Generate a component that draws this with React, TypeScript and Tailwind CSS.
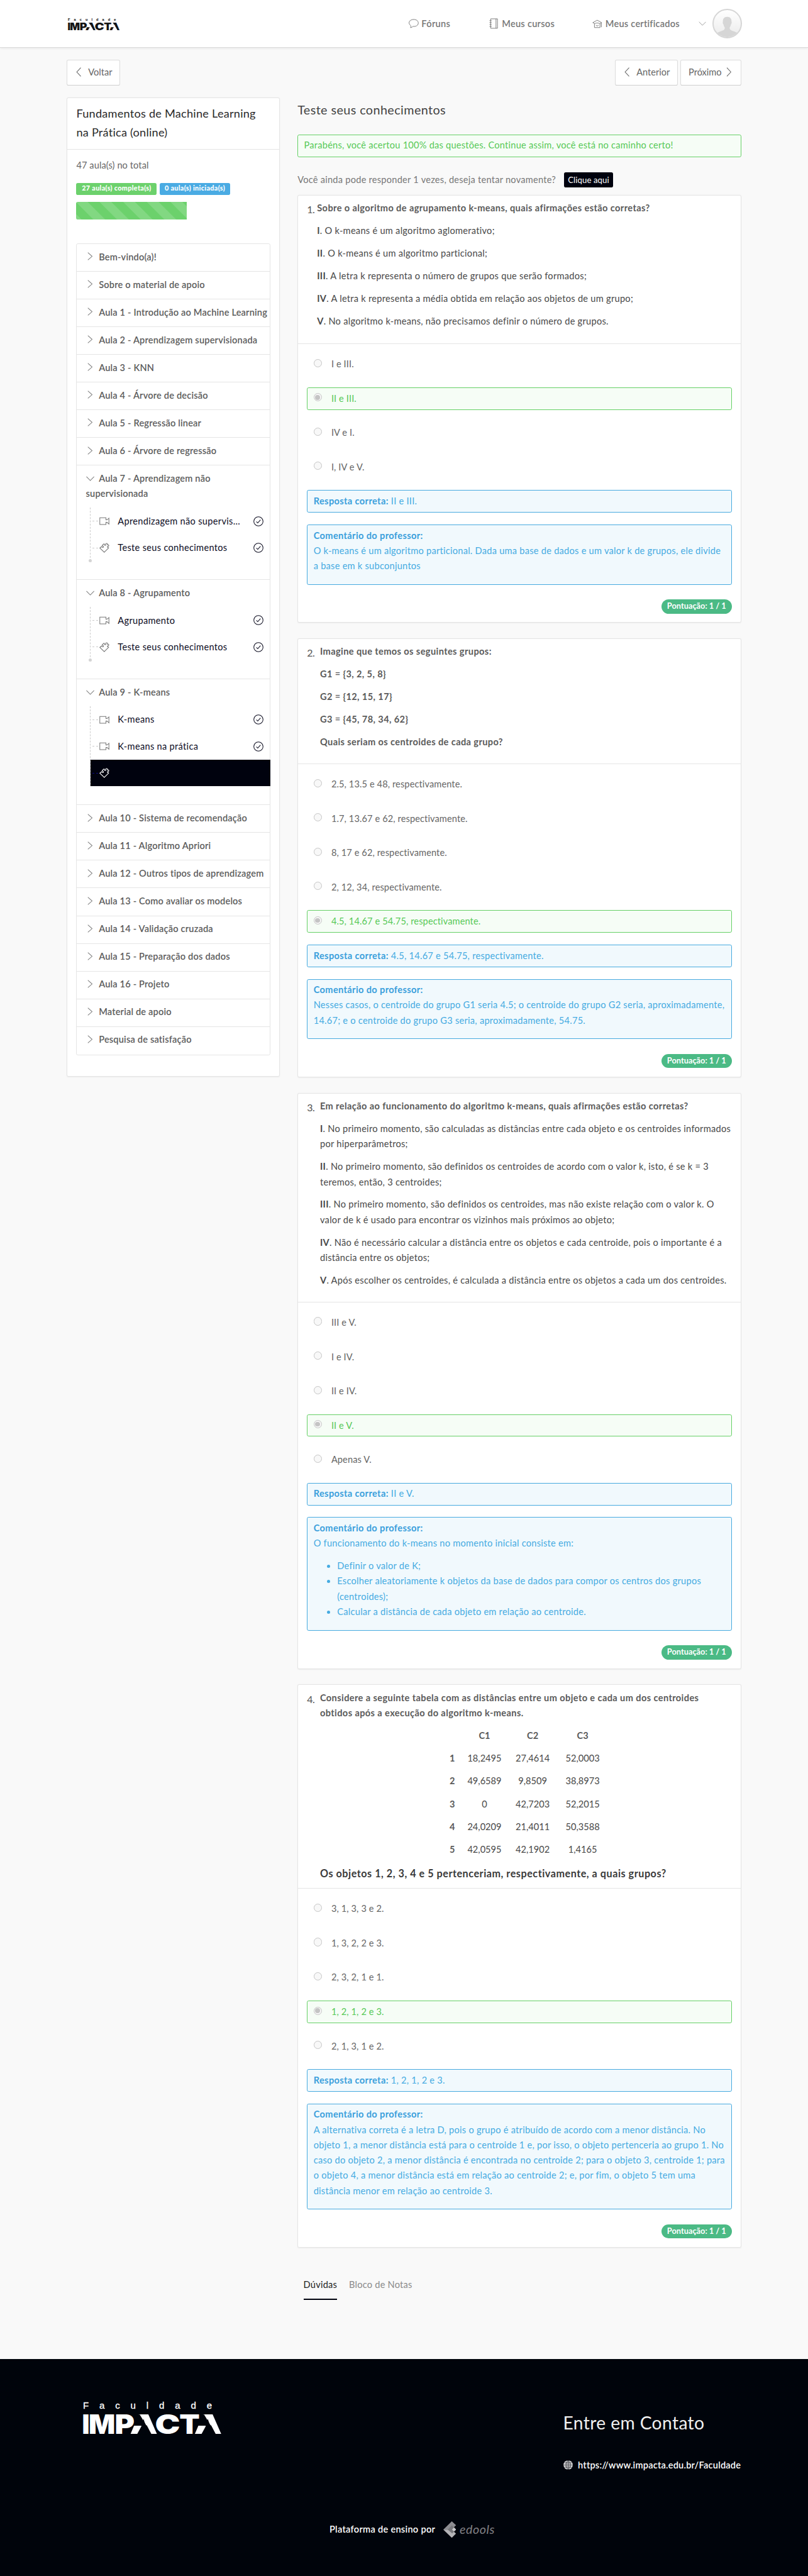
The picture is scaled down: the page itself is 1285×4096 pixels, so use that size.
import React from "react";

type Line = React.ReactNode;

function Lines({ lines }: { lines: Line[] }) {
  return (
    <>
      {lines.map((line, i) => (
        <React.Fragment key={i}>
          {i > 0 && <br />}
          {line}
        </React.Fragment>
      ))}
    </>
  );
}

/* ---------- icons ---------- */

function ChevronRight({ className }: { className: string }) {
  return (
    <svg viewBox="0 0 9 14" className={className} fill="none" stroke="currentColor" strokeWidth="1.1">
      <path d="M0.8 0.8 L8 7 L0.8 13.2" />
    </svg>
  );
}

function ChevronLeft({ className }: { className: string }) {
  return (
    <svg viewBox="0 0 9 16" className={className} fill="none" stroke="currentColor" strokeWidth="1.1">
      <path d="M8 0.6 L1.2 8 L8 15.4" />
    </svg>
  );
}

function ChevronDown({ className }: { className: string }) {
  return (
    <svg viewBox="0 0 14 9" className={className} fill="none" stroke="currentColor" strokeWidth="1.1">
      <path d="M0.5 1 L7 7.5 L13.5 1" />
    </svg>
  );
}

function VideoIcon() {
  return (
    <svg viewBox="0 0 17 14" className="h-[14px] w-[17px]" fill="none" stroke="currentColor" strokeWidth="1.1">
      <path d="M0.8 1.3 H11.2 V5 L13.4 4.6 L16.2 2 V12 L13.4 9.4 L11.2 9 V12.7 H0.8 Z" />
    </svg>
  );
}

function QuizIcon() {
  return (
    <svg viewBox="0 0 17 17" className="h-[17px] w-[17px]" fill="none" stroke="currentColor" strokeWidth="1.2" strokeLinejoin="round">
      <path d="M8.3 16 L0.8 9 L3.6 6.6 C4.4 6.2 4.6 8.2 5.9 8 C7.3 7.8 7.2 5.9 6 5.6 C5 5.4 4.4 5.2 5 4.4 L7.4 2 C8.2 1.6 8.6 2.2 8.6 3.4 C8.8 4.8 10.9 4.7 10.8 3.2 C10.7 1.8 11 1 12.4 1 C14.4 1 14 3 13.4 3.6 C15.2 2.8 16.6 4.4 15.6 5.8 C14.8 6.8 13.6 6.2 13.4 7 C13.4 7.8 15 7.8 15.8 8.6 Z" />
    </svg>
  );
}

function CheckIcon() {
  return (
    <svg viewBox="0 0 17 17" className="h-[17px] w-[17px]" fill="none" stroke="#0b0b1e" strokeWidth="1.1">
      <circle cx="8.5" cy="8.5" r="7.8" />
      <path d="M5 9 L7.3 11.2 L12 6" />
    </svg>
  );
}

function SpeechIcon() {
  return (
    <svg viewBox="0 0 17 16" className="h-[16px] w-[17px]" fill="none" stroke="currentColor" strokeWidth="1">
      <path d="M3.6 11.6 C-2.6 7 1.6 1 8.5 1 C13 1 16.2 3.6 16.2 7 C16.2 11 12 13.4 7.2 12.7 C6 14 4.6 14.6 2.9 14.8 C3.6 13.8 3.9 12.8 3.6 11.6 Z" />
    </svg>
  );
}

function NotebookIcon() {
  return (
    <svg viewBox="0 0 15 18" className="h-[18px] w-[15px]" fill="none" stroke="currentColor" strokeWidth="1">
      <path d="M2.5 1 H14 V17 H2.5 Z M11.5 1 V17 M0.5 4 H4 M0.5 7.2 H4 M0.5 10.6 H4 M0.5 14 H4" />
    </svg>
  );
}

function GraduationIcon() {
  return (
    <svg viewBox="0 0 17 15" className="h-[15px] w-[17px]" fill="none" stroke="currentColor" strokeWidth="1">
      <path d="M8.3 1.2 L0.8 5.3 L4 7 C5.6 5.6 11 5.6 12.6 7 L15.8 5.3 Z M3.6 7 V13.6 H13 V7 M6 9.6 L8.3 11 L10.6 9.6 M15.3 5.6 V13" />
    </svg>
  );
}

function GlobeIcon() {
  return (
    <svg viewBox="0 0 16 16" className="h-[16px] w-[16px]">
      <circle cx="8" cy="8" r="7.8" fill="#e9e9ea" />
      <g fill="none" stroke="#00040b" strokeWidth="0.8">
        <ellipse cx="8" cy="8" rx="3.6" ry="7.4" />
        <path d="M8 0.5 V15.5 M0.5 8 H15.5 M1.6 4.4 H14.4 M1.6 11.6 H14.4" />
      </g>
    </svg>
  );
}

function Avatar() {
  return (
    <div className="h-[50px] w-[50px] overflow-hidden rounded-full border-[3px] border-[#d6d6d6] bg-gradient-to-b from-white to-[#ebebeb]">
      <svg viewBox="0 0 44 44" className="h-full w-full" fill="#d6d6d6">
        <path d="M22 11 C27 11 29.4 14.4 29 19 C29.6 20 29.2 22.4 28 23.4 C27.6 26 26.6 27.4 26 28.4 C25.8 31.4 27 32.8 31 34 C35.5 35.4 38 36.4 39 38 L39 44 H5 V38 C6 36.4 8.5 35.4 13 34 C17 32.8 18.2 31.4 18 28.4 C17.4 27.4 16.4 26 16 23.4 C14.8 22.4 14.4 20 15 19 C14.6 14.4 17 11 22 11 Z" />
      </svg>
    </div>
  );
}

/* The wordmark: each letter is stretched to its own width, and both As lose
   the upper half of their left leg. */
type LogoLetter = { c: string; x: number; w: number };

const SLASHED_LETTERS: LogoLetter[] = [
  { c: "A", x: 79.2, w: 47 },
  { c: "A", x: 188, w: 47 },
];

const PLAIN_LETTERS: LogoLetter[] = [
  { c: "I", x: -1.6, w: 12.8 },
  { c: "M", x: 9.6, w: 45 },
  { c: "P", x: 53.8, w: 33.5 },
  { c: "C", x: 121.8, w: 42.5 },
  { c: "T", x: 163, w: 34.5 },
];

function LogoLetters({ letters }: { letters: LogoLetter[] }) {
  return (
    <>
      {letters.map((l) => (
        <text key={l.x} x={l.x} y="54.4" fontFamily="Inter" fontWeight="900" fontSize="45" textLength={l.w} lengthAdjust="spacingAndGlyphs">
          {l.c}
        </text>
      ))}
    </>
  );
}

function Logo({ className, ink, paper }: { className: string; ink: string; paper: string }) {
  return (
    <svg viewBox="0 0 236 56" className={`overflow-visible ${className}`} fill={ink}>
      <text x="0" y="11.6" fontFamily="Liberation Sans" fontSize="16" textLength="218" stroke={ink} strokeWidth="0.3">
        Faculdade
      </text>
      <LogoLetters letters={SLASHED_LETTERS} />
      {[79.9, 188.7].map((x) => (
        <g key={x} fill={paper} transform={`translate(${x} 21.5)`}>
          <path d="M7 0 H16 L27.4 18.8 H5 Z" />
          <path d="M19.6 18.5 H28 L36 33.4 H11.4 Z" />
        </g>
      ))}
      <LogoLetters letters={PLAIN_LETTERS} />
    </svg>
  );
}

function EdoolsMark() {
  return (
    <svg viewBox="0 0 22 28" className="h-[28px] w-[22px]">
      <path d="M14.4 0 L21.4 6.5 L14 14.5 L0 14 Z" fill="#8d8d91" />
      <path d="M14.4 28 L21.4 21 L14.4 14 L0 14 Z" fill="#b4b4b7" />
      <path d="M14.4 7 L21.8 14 L15 20.5 L7.4 14 Z" fill="#77777b" />
      <path d="M18 10.4 L21.8 14 L18 17.4 L14.8 14 Z" fill="#c9c9cb" />
    </svg>
  );
}

/* ---------- header ---------- */

function Header() {
  return (
    <header className="h-[81px] border-b border-[#dadada] bg-white shadow-[0_1px_4px_rgba(0,0,0,0.08)]">
      <div className="mx-auto flex h-[80px] w-[1143px] items-center pl-[3.5px] text-[15.5px] font-semibold text-[#777]">
        <Logo className="mt-[2px] h-[21px] w-[88px]" ink="#141414" paper="#ffffff" />
        <nav className="ml-auto flex items-center">
          <a className="flex items-center gap-[5px] tracking-[0.35px]">
            <SpeechIcon />
            <span className="w-[49px] whitespace-nowrap">Fóruns</span>
          </a>
          <a className="ml-[65px] flex items-center gap-[7px] tracking-[0.28px]">
            <NotebookIcon />
            <span className="w-[89px] whitespace-nowrap">Meus cursos</span>
          </a>
          <a className="ml-[64px] flex items-center gap-[5px] tracking-[0.24px]">
            <GraduationIcon />
            <span className="w-[126px] whitespace-nowrap">Meus certificados</span>
          </a>
          <ChevronDown className="ml-[31px] h-[8px] w-[13px] text-[#999]" />
        </nav>
        <div className="ml-[11px]">
          <Avatar />
        </div>
      </div>
    </header>
  );
}

function NavButton({ className, children }: { className: string; children: React.ReactNode }) {
  return (
    <button className={`flex h-[44px] items-center rounded-[3px] border border-[#dcdcdc] border-b-[#cfcfcf] bg-white pb-[2px] text-[15.5px] text-[#666] ${className}`}>
      {children}
    </button>
  );
}

/* ---------- sidebar ---------- */

type Lesson = { kind: "video" | "quiz"; title?: string };
type Section = { title: Line[]; lessons?: Lesson[] };

const SECTIONS: Section[] = [
  { title: ["Bem-vindo(a)!"] },
  { title: ["Sobre o material de apoio"] },
  { title: ["Aula 1 - Introdução ao Machine Learning"] },
  { title: ["Aula 2 - Aprendizagem supervisionada"] },
  { title: ["Aula 3 - KNN"] },
  { title: ["Aula 4 - Árvore de decisão"] },
  { title: ["Aula 5 - Regressão linear"] },
  { title: ["Aula 6 - Árvore de regressão"] },
  {
    title: ["Aula 7 - Aprendizagem não", "supervisionada"],
    lessons: [
      { kind: "video", title: "Aprendizagem não supervis..." },
      { kind: "quiz", title: "Teste seus conhecimentos" },
    ],
  },
  {
    title: ["Aula 8 - Agrupamento"],
    lessons: [
      { kind: "video", title: "Agrupamento" },
      { kind: "quiz", title: "Teste seus conhecimentos" },
    ],
  },
  {
    title: ["Aula 9 - K-means"],
    lessons: [
      { kind: "video", title: "K-means" },
      { kind: "video", title: "K-means na prática" },
      { kind: "quiz" },
    ],
  },
  { title: ["Aula 10 - Sistema de recomendação"] },
  { title: ["Aula 11 - Algoritmo Apriori"] },
  { title: ["Aula 12 - Outros tipos de aprendizagem"] },
  { title: ["Aula 13 - Como avaliar os modelos"] },
  { title: ["Aula 14 - Validação cruzada"] },
  { title: ["Aula 15 - Preparação dos dados"] },
  { title: ["Aula 16 - Projeto"] },
  { title: ["Material de apoio"] },
  { title: ["Pesquisa de satisfação"] },
];

function LessonRow({ lesson }: { lesson: Lesson }) {
  const current = !lesson.title;
  return (
    <div className={`flex h-[45.1px] items-center pl-[3px] ${current ? "-mr-px bg-[#00020e] text-white" : "text-[#777]"}`}>
      <span className={`w-[10px] border-t border-dashed ${current ? "border-[#0a0a7a]" : "border-[#ccc]"}`} />
      <span className="ml-[2px]">{lesson.kind === "video" ? <VideoIcon /> : <QuizIcon />}</span>
      {lesson.title && (
        <>
          <span className="ml-[14px] whitespace-nowrap text-[15.5px] tracking-[0.33px] text-[#0b0b1e]">{lesson.title}</span>
          <span className="mr-[10px] ml-auto">
            <CheckIcon />
          </span>
        </>
      )}
    </div>
  );
}

function SectionItem({ section, last }: { section: Section; last: boolean }) {
  const open = !!section.lessons;
  return (
    <div className={`${open ? "" : "h-[46.8px]"} ${last ? "" : "border-b border-[#e5e5e5]"}`}>
      <div className={`pt-[9px] pl-[15px] text-[15.5px] leading-[26px] font-semibold tracking-[0.19px] whitespace-nowrap text-[#5c5c5c] ${open ? "pb-[10.5px]" : ""}`}>
        <span className="mr-[8px] inline-flex w-[14px] justify-center text-[#808080]">
          {open ? <ChevronDown className="h-[9px] w-[14px]" /> : <ChevronRight className="h-[14px] w-[9px] translate-y-[1px]" />}
        </span>
        <Lines lines={section.title} />
      </div>
      {section.lessons && (
        <div className="relative ml-[22px] pb-[31px]">
          <div className="border-l border-dashed border-[#ccc]">
            {section.lessons.map((l, i) => (
              <LessonRow key={i} lesson={l} />
            ))}
          </div>
          {section.lessons.every((l) => l.title) && <span className="absolute bottom-[29px] left-[-2px] h-[5px] w-[5px] rounded-full bg-[#d4d4d4]" />}
        </div>
      )}
    </div>
  );
}

function Sidebar() {
  return (
    <aside className="h-[1654.5px] w-[360px] rounded-[3px] border border-[#e5e5e5] bg-white shadow-[0_1px_2px_rgba(0,0,0,0.06)]">
      <h2 className="h-[86.5px] border-b border-[#e5e5e5] pt-[9px] pl-[15px] text-[19.3px] leading-[32px] tracking-[0.25px] whitespace-nowrap text-[#2a2a2a]">
        Fundamentos de Machine Learning
        <br />
        na Prática (online)
      </h2>
      <div className="px-[15px] pt-[14px]">
        <p className="text-[15.5px] leading-[26px] tracking-[0.1px] text-[#666]">47 aula(s) no total</p>
        <div className="mt-[17px] flex gap-[5px] text-[11.5px] leading-[17px] font-black tracking-[0.36px] text-white">
          <span className="h-[20px] w-[136px] rounded-[3px] bg-[#6cd16c] text-center whitespace-nowrap">27 aula(s) completa(s)</span>
          <span className="h-[20px] w-[119px] rounded-[3px] bg-[#4aabe3] text-center whitespace-nowrap">0 aula(s) iniciada(s)</span>
        </div>
        <div className="mt-[12px] h-[30px] w-[187px] rounded-l-[3px] bg-[#6cd16c] bg-[linear-gradient(45deg,rgba(255,255,255,.15)_25%,transparent_25%,transparent_50%,rgba(255,255,255,.15)_50%,rgba(255,255,255,.15)_75%,transparent_75%,transparent)] bg-[length:40px_40px]" />
        <div className="mt-[40px] rounded-[3px] border border-[#e5e5e5]">
          {SECTIONS.map((s, i) => (
            <SectionItem key={i} section={s} last={i === SECTIONS.length - 1} />
          ))}
        </div>
      </div>
    </aside>
  );
}

/* ---------- questions ---------- */

type Question = {
  n: number;
  height: string;
  headHeight: string;
  numberWidth: string;
  body: React.ReactNode;
  options: string[];
  answer: number;
  comment: React.ReactNode;
};

function P({ children, bold }: { children: React.ReactNode; bold?: boolean }) {
  return (
    <p className={`mb-[12.5px] leading-[25.75px] whitespace-nowrap ${bold ? "font-bold tracking-[0.42px] text-[#5a5a5a]" : "tracking-[0.3px] text-[#484848]"}`}>
      {children}
    </p>
  );
}

const TABLE = [
  ["1", "18,2495", "27,4614", "52,0003"],
  ["2", "49,6589", "9,8509", "38,8973"],
  ["3", "0", "42,7203", "52,2015"],
  ["4", "24,0209", "21,4011", "50,3588"],
  ["5", "42,0595", "42,1902", "1,4165"],
];

function DistanceTable() {
  return (
    <div className="mt-[-6px] ml-[205px] w-[280px] text-[15.5px] text-[#484848]">
      <div className="grid h-[38.3px] grid-cols-[37px_72px_91px_78px] items-center text-center font-bold text-[#5a5a5a]">
        <span />
        <span>C1</span>
        <span>C2</span>
        <span>C3</span>
      </div>
      {TABLE.map((row) => (
        <div key={row[0]} className="grid h-[38.3px] grid-cols-[37px_72px_91px_78px] items-center text-center">
          {row.map((cell, i) => (
            <span key={i} className={i === 0 ? "font-bold text-[#5a5a5a]" : ""}>
              {cell}
            </span>
          ))}
        </div>
      ))}
    </div>
  );
}

const QUESTIONS: Question[] = [
  {
    n: 1,
    height: "h-[723px] mb-[26.6px]",
    headHeight: "h-[251px]",
    numberWidth: "w-[17px]",
    body: (
      <>
        <P bold>Sobre o algoritmo de agrupamento k-means, quais afirmações estão corretas?</P>
        <P><b>I</b>. O k-means é um algoritmo aglomerativo;</P>
        <P><b>II</b>. O k-means é um algoritmo particional;</P>
        <P><b>III</b>. A letra k representa o número de grupos que serão formados;</P>
        <P><b>IV</b>. A letra k representa a média obtida em relação aos objetos de um grupo;</P>
        <P><b>V</b>. No algoritmo k-means, não precisamos definir o número de grupos.</P>
      </>
    ),
    options: ["I e III.", "II e III.", "IV e I.", "I, IV e V."],
    answer: 1,
    comment: (
      <p className="mb-[12.5px]">
        <Lines
          lines={[
            "O k-means é um algoritmo particional. Dada uma base de dados e um valor k de grupos, ele divide",
            "a base em k subconjuntos",
          ]}
        />
      </p>
    ),
  },
  {
    n: 2,
    height: "h-[742px] mb-[26.3px]",
    headHeight: "h-[211.5px]",
    numberWidth: "w-[22px]",
    body: (
      <>
        <P bold>Imagine que temos os seguintes grupos:</P>
        <P bold>G1 <span className="font-medium">=</span> {"{3, 2, 5, 8}"}</P>
        <P bold>G2 <span className="font-medium">=</span> {"{12, 15, 17}"}</P>
        <P bold>G3 <span className="font-medium">=</span> {"{45, 78, 34, 62}"}</P>
        <P bold>Quais seriam os centroides de cada grupo?</P>
      </>
    ),
    options: [
      "2.5, 13.5 e 48, respectivamente.",
      "1.7, 13.67 e 62, respectivamente.",
      "8, 17 e 62, respectivamente.",
      "2, 12, 34, respectivamente.",
      "4.5, 14.67 e 54.75, respectivamente.",
    ],
    answer: 4,
    comment: (
      <p className="mb-[12.5px]">
        <Lines
          lines={[
            "Nesses casos, o centroide do grupo G1 seria 4.5; o centroide do grupo G2 seria, aproximadamente,",
            "14.67; e o centroide do grupo G3 seria, aproximadamente, 54.75.",
          ]}
        />
      </p>
    ),
  },
  {
    n: 3,
    height: "h-[974.1px] mb-[25.9px]",
    headHeight: "h-[353px]",
    numberWidth: "w-[22px]",
    body: (
      <>
        <P bold>Em relação ao funcionamento do algoritmo k-means, quais afirmações estão corretas?</P>
        <P><Lines lines={[<><b>I</b>. No primeiro momento, são calculadas as distâncias entre cada objeto e os centroides informados</>, "por hiperparâmetros;"]} /></P>
        <P><Lines lines={[<><b>II</b>. No primeiro momento, são definidos os centroides de acordo com o valor k, isto, é se k = 3</>, "teremos, então, 3 centroides;"]} /></P>
        <P><Lines lines={[<><b>III</b>. No primeiro momento, são definidos os centroides, mas não existe relação com o valor k. O</>, "valor de k é usado para encontrar os vizinhos mais próximos ao objeto;"]} /></P>
        <P><Lines lines={[<><b>IV</b>. Não é necessário calcular a distância entre os objetos e cada centroide, pois o importante é a</>, "distância entre os objetos;"]} /></P>
        <P><b>V</b>. Após escolher os centroides, é calculada a distância entre os objetos a cada um dos centroides.</P>
      </>
    ),
    options: ["III e V.", "I e IV.", "II e IV.", "II e V.", "Apenas V."],
    answer: 3,
    comment: (
      <>
        <p className="mb-[12.5px]">O funcionamento do k-means no momento inicial consiste em:</p>
        <ul className="mb-[12.5px] list-disc pl-[40px]">
          <li>Definir o valor de K;</li>
          <li><Lines lines={["Escolher aleatoriamente k objetos da base de dados para compor os centros dos grupos", "(centroides);"]} /></li>
          <li>Calcular a distância de cada objeto em relação ao centroide.</li>
        </ul>
      </>
    ),
  },
  {
    n: 4,
    height: "h-[952.3px]",
    headHeight: "h-[344.2px]",
    numberWidth: "w-[22px]",
    body: (
      <>
        <P bold><Lines lines={["Considere a seguinte tabela com as distâncias entre um objeto e cada um dos centroides", "obtidos após a execução do algoritmo k-means."]} /></P>
        <DistanceTable />
        <p className="mt-[8px] text-[17.2px] leading-[27px] font-bold tracking-[0.56px] whitespace-nowrap text-[#3a3a3a]">
          Os objetos 1, 2, 3, 4 e 5 pertenceriam, respectivamente, a quais grupos?
        </p>
      </>
    ),
    options: ["3, 1, 3, 3 e 2.", "1, 3, 2, 2 e 3.", "2, 3, 2, 1 e 1.", "1, 2, 1, 2 e 3.", "2, 1, 3, 1 e 2."],
    answer: 3,
    comment: (
      <p className="mb-[12.5px]">
        <Lines
          lines={[
            "A alternativa correta é a letra D, pois o grupo é atribuído de acordo com a menor distância. No",
            "objeto 1, a menor distância está para o centroide 1 e, por isso, o objeto pertenceria ao grupo 1. No",
            "caso do objeto 2, a menor distância é encontrada no centroide 2; para o objeto 3, centroide 1; para",
            "o objeto 4, a menor distância está em relação ao centroide 2; e, por fim, o objeto 5 tem uma",
            "distância menor em relação ao centroide 3.",
          ]}
        />
      </p>
    ),
  },
];

function Option({ text, selected }: { text: string; selected: boolean }) {
  return (
    <div
      className={`mb-[20px] flex h-[38px] items-center rounded-[3px] border pl-[10px] text-[15.5px] tracking-[0.12px] ${
        selected ? "border-[#66d066] bg-[#f6fdf6] text-[#57c957]" : "border-transparent text-[#666]"
      }`}
    >
      <span className="mb-[4px] flex h-[14px] w-[14px] items-center justify-center rounded-full border border-[#c4c4c4] bg-[#f8f8f8]">
        {selected && <span className="h-[8px] w-[8px] rounded-full bg-[#c4c4c4]" />}
      </span>
      <span className="ml-[16px]">{text}</span>
    </div>
  );
}

function QuestionCard({ q }: { q: Question }) {
  return (
    <section className={`rounded-[3px] border border-[#e5e5e5] bg-white shadow-[0_1px_2px_rgba(0,0,0,0.06)] ${q.height}`}>
      <div className={`flex border-b border-[#e5e5e5] pt-[9px] pl-[15px] text-[15.5px] ${q.headHeight}`}>
        <span className={`shrink-0 pt-[2px] text-[17px] leading-[26px] tracking-[-0.5px] text-[#555] ${q.numberWidth}`}>{q.n}.</span>
        <div>{q.body}</div>
      </div>
      <div className="px-[15px] pt-[15.2px]">
        {q.options.map((o, i) => (
          <Option key={o} text={o} selected={i === q.answer} />
        ))}
        <div className="h-[38px] rounded-[3px] border border-[#47aadf] bg-[#f1f9fd] pt-[5px] pl-[10px] text-[15.5px] leading-[25.75px] tracking-[0.28px] text-[#45abe2]">
          <b className="tracking-[0.4px] text-[#3a9fdc]">Resposta correta:</b> {q.options[q.answer]}
        </div>
        <div className="mt-[20px] rounded-[3px] border border-[#47aadf] bg-[#f1f9fd] pt-[5px] pb-[5px] pl-[10px] text-[15.5px] leading-[25.75px] tracking-[0.28px] whitespace-nowrap text-[#45abe2]">
          <b className="tracking-[0.4px] text-[#3a9fdc]">Comentário do professor:</b>
          {q.comment}
        </div>
        <div className="mt-[25px] ml-auto h-[24px] w-[118.5px] rounded-full bg-[#4bba85] text-center text-[13.6px] leading-[23px] font-bold whitespace-nowrap text-white">
          Pontuação: 1 / 1
        </div>
      </div>
    </section>
  );
}

/* ---------- footer ---------- */

function Footer() {
  return (
    <footer className="h-[367px] bg-[#00040b] text-white">
      <div className="mx-auto flex w-[1140px] justify-between pl-[27px]">
        <Logo className="mt-[73px] h-[56px] w-[236px]" ink="#ffffff" paper="#00040b" />
        <div className="mt-[88px] w-[301px]">
          <h3 className="text-[30px] leading-[42px] font-normal tracking-[0.4px] whitespace-nowrap text-[#f0f0f0]">Entre em Contato</h3>
          <a className="mt-[38px] flex items-center gap-[9px] text-[15.5px] leading-[24px] font-semibold tracking-[0.23px] whitespace-nowrap">
            <GlobeIcon />
            https://www.impacta.edu.br/Faculdade
          </a>
        </div>
      </div>
      <div className="mt-[83px] flex items-center pl-[557px]">
        <span className="w-[180px] text-[15.5px] font-semibold tracking-[0.3px] whitespace-nowrap">Plataforma de ensino por</span>
        <span className="ml-[12px]">
          <EdoolsMark />
        </span>
        <span className="ml-[6px] text-[21px] leading-[28px] tracking-[0.6px] text-[#808084] italic">edools</span>
      </div>
    </footer>
  );
}

export default function App() {
  return (
    <div className="h-[4354px] w-[1366px] overflow-hidden bg-[#f9f9f9] [font-family:Lato,'Open_Sans',sans-serif] [zoom:0.9407]">
      <Header />
      <div className="mx-auto flex h-[3906px] w-[1140px] flex-col pt-[20px]">
        <div className="flex">
          <NavButton className="w-[90px] pl-[15px]">
            <ChevronLeft className="mr-[11px] h-[16px] w-[9px]" />
            Voltar
          </NavButton>
          <NavButton className="ml-auto w-[106px] pl-[15px]">
            <ChevronLeft className="mr-[11px] h-[16px] w-[9px]" />
            Anterior
          </NavButton>
          <NavButton className="ml-[4px] w-[103px] pl-[13px]">
            Próximo
            <ChevronLeft className="ml-[8px] h-[16px] w-[9px] rotate-180" />
          </NavButton>
        </div>
        <div className="mt-[20px] flex items-start">
          <Sidebar />
          <main className="ml-[30px] w-[750px]">
            <h1 className="mt-[5px] text-[21px] leading-[32px] font-normal tracking-[0.45px] text-[#444]">Teste seus conhecimentos</h1>
            <div className="mt-[26px] h-[38px] rounded-[3px] border border-[#66d066] bg-[#f6fdf6] pl-[10px] text-[15.5px] leading-[35px] tracking-[0.26px] text-[#57c957]">
              Parabéns, você acertou 100% das questões. Continue assim, você está no caminho certo!
            </div>
            <div className="mt-[25px] flex h-[26px] items-center text-[15.5px] tracking-[0.27px] text-[#777]">
              <span className="w-[451px] whitespace-nowrap">Você ainda pode responder 1 vezes, deseja tentar novamente?</span>
              <button className="h-[25px] w-[82px] rounded-[3px] bg-[#00020e] text-[14px] leading-[24px] tracking-[0.1px] whitespace-nowrap text-white">Clique aqui</button>
            </div>
            <div className="mt-[12.4px]">
              {QUESTIONS.map((q) => (
                <QuestionCard key={q.n} q={q} />
              ))}
            </div>
            <div className="mt-[48.5px] ml-[10px] flex gap-[20px] text-[15.5px] leading-[28px] tracking-[0.26px] text-[#8a8a8a]">
              <span className="h-[40px] border-b-[3px] border-[#00020e] text-[#222]">Dúvidas</span>
              <span>Bloco de Notas</span>
            </div>
          </main>
        </div>
      </div>
      <Footer />
    </div>
  );
}
